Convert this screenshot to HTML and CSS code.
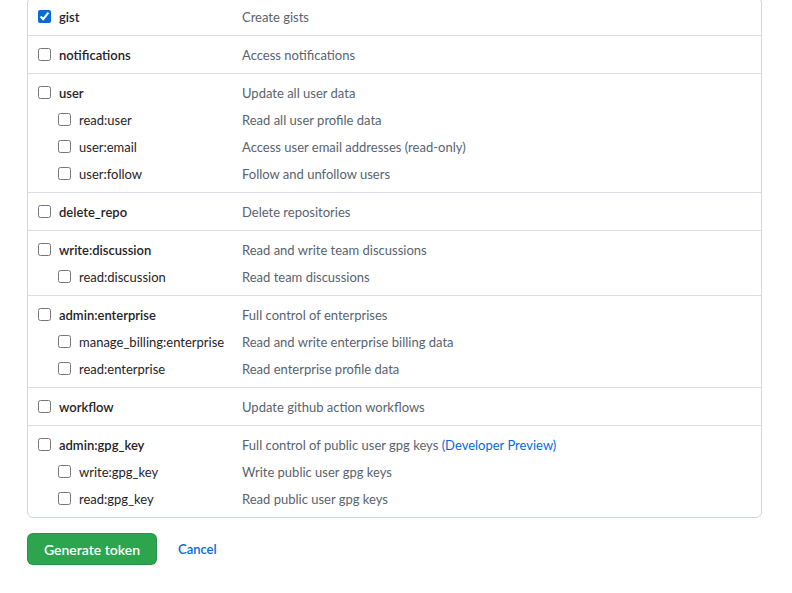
FILE: index.html
```html
<!DOCTYPE html>
<html>
<head>
<meta charset="utf-8">
<link rel="stylesheet" href="styles.css">
</head>
<body>
<div class="page">
  <div class="scopes">
    <div class="group">
      <div class="row main"><label class="name"><input type="checkbox" checked><span>gist</span></label><span class="desc">Create gists</span></div>
    </div>
    <div class="group">
      <div class="row main"><label class="name"><input type="checkbox"><span>notifications</span></label><span class="desc">Access notifications</span></div>
    </div>
    <div class="group">
      <div class="row main"><label class="name"><input type="checkbox"><span>user</span></label><span class="desc">Update all user data</span></div>
      <div class="row sub"><label class="name"><input type="checkbox"><span>read:user</span></label><span class="desc">Read all user profile data</span></div>
      <div class="row sub"><label class="name"><input type="checkbox"><span>user:email</span></label><span class="desc">Access user email addresses (read-only)</span></div>
      <div class="row sub"><label class="name"><input type="checkbox"><span>user:follow</span></label><span class="desc">Follow and unfollow users</span></div>
    </div>
    <div class="group">
      <div class="row main"><label class="name"><input type="checkbox"><span>delete_repo</span></label><span class="desc">Delete repositories</span></div>
    </div>
    <div class="group">
      <div class="row main"><label class="name"><input type="checkbox"><span>write:discussion</span></label><span class="desc">Read and write team discussions</span></div>
      <div class="row sub"><label class="name"><input type="checkbox"><span>read:discussion</span></label><span class="desc">Read team discussions</span></div>
    </div>
    <div class="group">
      <div class="row main"><label class="name"><input type="checkbox"><span>admin:enterprise</span></label><span class="desc">Full control of enterprises</span></div>
      <div class="row sub"><label class="name"><input type="checkbox"><span>manage_billing:enterprise</span></label><span class="desc">Read and write enterprise billing data</span></div>
      <div class="row sub"><label class="name"><input type="checkbox"><span>read:enterprise</span></label><span class="desc">Read enterprise profile data</span></div>
    </div>
    <div class="group">
      <div class="row main"><label class="name"><input type="checkbox"><span>workflow</span></label><span class="desc">Update github action workflows</span></div>
    </div>
    <div class="group">
      <div class="row main"><label class="name"><input type="checkbox"><span>admin:gpg_key</span></label><span class="desc">Full control of public user gpg keys <a class="link" href="#">(Developer Preview)</a></span></div>
      <div class="row sub"><label class="name"><input type="checkbox"><span>write:gpg_key</span></label><span class="desc">Write public user gpg keys</span></div>
      <div class="row sub"><label class="name"><input type="checkbox"><span>read:gpg_key</span></label><span class="desc">Read public user gpg keys</span></div>
    </div>
  </div>
  <div class="actions">
    <button class="btn-primary" type="button">Generate token</button>
    <a class="cancel" href="#">Cancel</a>
  </div>
</div>
</body>
</html>
```
FILE: styles.css
```css
* { box-sizing: border-box; }
html, body { margin: 0; padding: 0; background: #ffffff; }
body {
  font-family: Lato, "Noto Sans", "Liberation Sans", sans-serif;
  font-size: 13px;
  color: #1f2328;
}
.page {
  padding-left: 27px;
  width: 762px;
}
.scopes {
  margin-top: -3px;
  border: 1px solid #d0d7de;
  border-radius: 6px;
}
.group {
  padding: 5px 0 5px 10px;
  border-top: 1px solid #d8dee4;
}
.group:first-child { border-top: none; }
.row {
  display: flex;
  align-items: center;
  height: 27px;
}
.name {
  display: flex;
  align-items: center;
  width: 204px;
  flex-shrink: 0;
}
.sub .name { padding-left: 20px; }
.name input {
  width: 13px;
  height: 13px;
  margin: 0 8px 0 0;
  accent-color: #0969da;
}
.main .name span { font-weight: 600; }
.desc { color: #59636e; }
.link { color: #0969da; text-decoration: none; }
.actions {
  display: flex;
  align-items: center;
  margin-top: 15px;
}
.btn-primary {
  width: 130px;
  height: 32px;
  border: 1px solid rgba(31,35,40,0.15);
  border-radius: 6px;
  background: #2da44e;
  color: #ffffff;
  font-family: inherit;
  font-size: 14px;
  font-weight: 600;
  padding: 0;
}
.cancel {
  margin-left: 21px;
  color: #0969da;
  font-weight: 600;
  text-decoration: none;
}
```
